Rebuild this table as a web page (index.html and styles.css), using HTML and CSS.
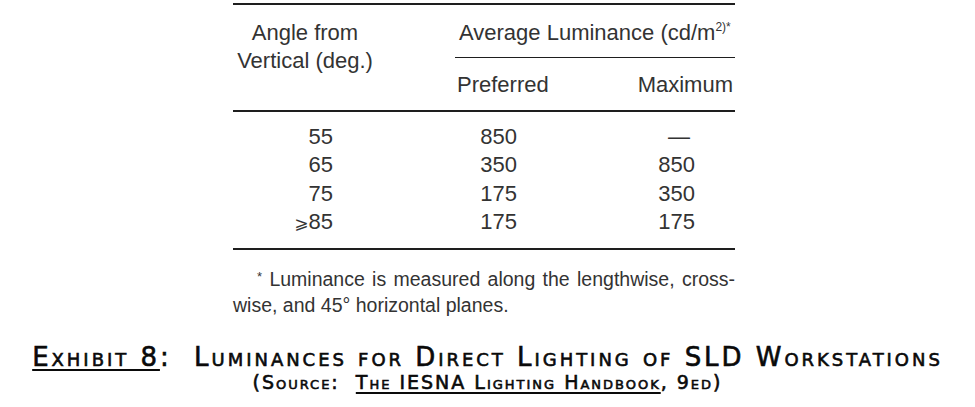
FILE: index.html
```html
<!DOCTYPE html>
<html>
<head>
<meta charset="utf-8">
<link rel="stylesheet" href="styles.css">
</head>
<body>
<div class="exhibit">
  <div class="table">
    <div class="head">
      <div class="head-angle">Angle from<br>Vertical (deg.)</div>
      <div class="head-lum">
        <div class="lum-title">Average Luminance (cd/m<sup>2)*</sup></div>
        <div class="lum-sub">
          <span>Preferred</span>
          <span>Maximum</span>
        </div>
      </div>
    </div>
    <div class="rows">
      <div class="c1">55</div><div class="c2">850</div><div class="c3 dash">—</div>
      <div class="c1">65</div><div class="c2">350</div><div class="c3">850</div>
      <div class="c1">75</div><div class="c2">175</div><div class="c3">350</div>
      <div class="c1"><span class="ge">⩾</span>85</div><div class="c2">175</div><div class="c3">175</div>
    </div>
  </div>
  <p class="note"><span class="ast">*</span> Luminance is measured along the lengthwise, cross-wise, and 45° horizontal planes.</p>
</div>
<div class="caption">
  <div class="cap-title"><u>Exhibit 8</u>:&nbsp; Luminances for Direct Lighting of SLD Workstations</div>
  <div class="cap-source">(Source:&nbsp; <u>The IESNA Lighting Handbook</u>, 9ed)</div>
</div>
</body>
</html>
```
FILE: styles.css
```css
html, body {
  margin: 0;
  padding: 0;
  background: #ffffff;
}
body {
  width: 975px;
  height: 407px;
  overflow: hidden;
}
.exhibit {
  margin-left: 233px;
  width: 502px;
  font-family: "Liberation Sans", Arial, sans-serif;
  color: #333333;
}
.table {
  margin-top: 3px;
  border-top: 2px solid #1e1e1e;
  border-bottom: 2px solid #1e1e1e;
}
.head {
  display: grid;
  grid-template-columns: 222px 1fr;
  height: 105px;
  border-bottom: 2px solid #1e1e1e;
  font-size: 22px;
  line-height: 28px;
}
.head-angle {
  width: 144px;
  text-align: center;
  padding-top: 14px;
}
.head-lum {
  padding-top: 14px;
}
.lum-title {
  padding-left: 4px;
  white-space: nowrap;
}
.lum-title sup {
  font-size: 12px;
  line-height: 0;
  vertical-align: 9px;
}
.lum-sub {
  margin-top: 10px;
  border-top: 1.5px solid #1e1e1e;
  padding-top: 13px;
  display: flex;
  justify-content: space-between;
  padding-left: 2px;
  padding-right: 2px;
}
.rows {
  display: grid;
  grid-template-columns: 100px 184px 178px;
  padding: 10.5px 0 10.5px;
  font-size: 22px;
  line-height: 28.5px;
  text-align: right;
}
.dash {
  padding-right: 5px;
}
.ge {
  font-family: "DejaVu Sans", sans-serif;
  font-size: 17px;
}
.note {
  margin: 14px 0 0;
  font-size: 19.5px;
  line-height: 26px;
  text-indent: 24px;
  text-align: justify;
}
.ast {
  font-size: 13px;
  vertical-align: 5px;
}
.caption {
  margin-top: 25px;
  text-align: center;
  font-family: "DejaVu Sans", sans-serif;
  font-variant: small-caps;
  -webkit-text-stroke: 0.6px #0a0a0a;
  color: #0a0a0a;
}
.caption u {
  text-decoration-thickness: 2px;
  text-underline-offset: 3px;
}
.cap-title {
  font-size: 26px;
  line-height: 28px;
  letter-spacing: 0.114em;
  white-space: nowrap;
}
.cap-source {
  font-size: 19px;
  line-height: 22px;
  letter-spacing: 0.105em;
  white-space: nowrap;
}
```
